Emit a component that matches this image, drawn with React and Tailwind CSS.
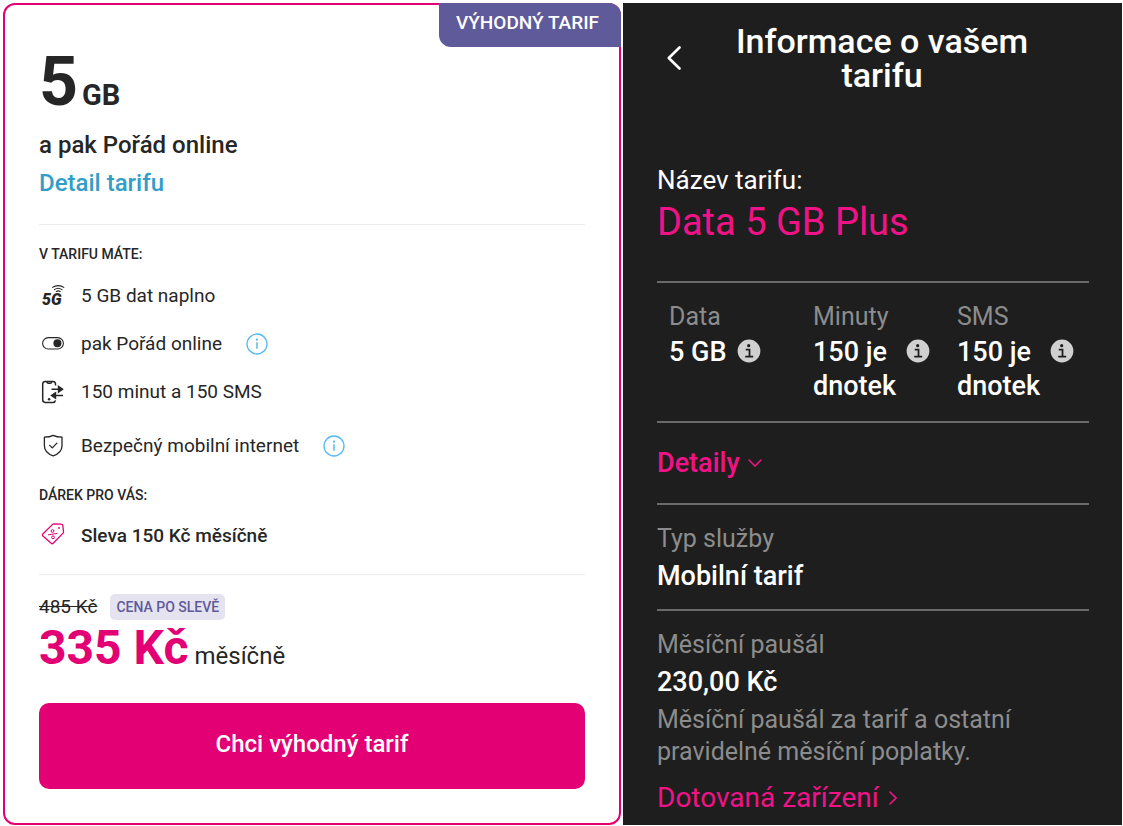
const stats = [
  { label: 'Data', lines: ['5 GB'] },
  { label: 'Minuty', lines: ['150 je', 'dnotek'] },
  { label: 'SMS', lines: ['150 je', 'dnotek'] },
]

function FiveGIcon() {
  return (
    <svg viewBox="0 0 24 24" className="h-6 w-6" fill="none" stroke="#262626" aria-hidden="true">
      <text x="1" y="21" fill="#262626" stroke="none" fontFamily="Roboto" fontSize="16" fontWeight="900" fontStyle="italic">5G</text>
      <g strokeWidth="1.1" strokeLinecap="round">
        <path d="M11.6 3.4C14.8 1 19.6 1 22.8 3.4" />
        <path d="M13.4 5.6c2.2-1.6 5.4-1.6 7.6 0" />
        <path d="M15.4 7.5c1.1-.8 2.6-.8 3.7 0" />
      </g>
    </svg>
  )
}

function ToggleIcon() {
  return (
    <svg viewBox="0 0 24 24" className="h-6 w-6" fill="none" aria-hidden="true">
      <rect x="1.6" y="5.6" width="20.8" height="11.4" rx="5.7" stroke="#262626" strokeWidth="1.1" />
      <circle cx="16.4" cy="11.3" r="4" fill="#262626" />
    </svg>
  )
}

function PhoneArrowsIcon() {
  return (
    <svg viewBox="0 0 24 24" className="h-6 w-6" fill="none" stroke="#262626" strokeWidth="1.5" aria-hidden="true">
      <path d="M14.5 5.5V4A2.6 2.6 0 0 0 12 1.4H4.2A2.6 2.6 0 0 0 1.7 4v15.8a2.6 2.6 0 0 0 2.5 2.6H12a2.6 2.6 0 0 0 2.5-2.1" />
      <path d="M5.8 1.6c.2 1.2.7 1.7 1.6 1.7h1.8c.9 0 1.4-.5 1.6-1.7" />
      <path d="M10.5 9.2H18M22 15.6h-8" />
      <path d="M16.8 5l6 4.2-6 4.2zM15.2 11.6l-6 4 6 4z" fill="#262626" stroke="none" />
      <circle cx="8.1" cy="19.3" r="1.2" fill="#262626" stroke="none" />
    </svg>
  )
}

function ShieldIcon() {
  return (
    <svg viewBox="0 0 24 24" className="h-6 w-6" fill="none" stroke="#262626" strokeWidth="1.3" strokeLinecap="round" strokeLinejoin="round" aria-hidden="true">
      <path d="M12.2 1.3c2.6 1.3 5.7 1.8 8.8 1.9v8.6c0 5-4 8.4-8.8 10.1-4.8-1.7-8.8-5.1-8.8-10.1V3.2c3.1-.1 6.2-.6 8.8-1.9z" />
      <path d="M8.7 11.4l2.6 2.5 4.6-4.8" />
    </svg>
  )
}

function TagIcon() {
  return (
    <svg viewBox="0 0 24 24" className="h-6 w-6" fill="none" stroke="#e20074" strokeWidth="1.3" strokeLinejoin="round" aria-hidden="true">
      <path d="M13 1.8l7.4.3c.8 0 1.3.5 1.4 1.2l.7 6.4c.1.5-.1 1-.4 1.4l-9.9 10.1c-.6.6-1.4.6-2 .1L1.9 14c-.6-.6-.6-1.4-.1-2L11.6 2.4c.4-.4.9-.6 1.4-.6z" />
      <circle cx="11.5" cy="9" r="1.4" strokeWidth="1" />
      <circle cx="12" cy="15.3" r="1.4" strokeWidth="1" />
      <path d="M7 12.9l9.3-1.5" strokeWidth="1" />
      <circle cx="18" cy="6" r=".9" fill="#e20074" stroke="none" />
    </svg>
  )
}

function InfoOutline() {
  return (
    <svg viewBox="0 0 22 22" className="h-[22px] w-[22px]" fill="none" stroke="#53baf2" aria-hidden="true">
      <circle cx="11" cy="11" r="10" strokeWidth="1.3" />
      <path d="M11 9.3v6.5" strokeWidth="1.5" />
      <circle cx="11" cy="6.7" r="1.1" fill="#53baf2" stroke="none" />
    </svg>
  )
}

function InfoSolid() {
  return (
    <svg viewBox="0 0 24 24" className="h-6 w-6" aria-hidden="true">
      <circle cx="12" cy="12" r="11.4" fill="#d0d0d0" />
      <circle cx="11.7" cy="6.7" r="1.6" fill="#1e1e1e" />
      <path d="M8.8 10.7h3.7v7M8.2 17.6h8" fill="none" stroke="#1e1e1e" strokeWidth="1.8" />
    </svg>
  )
}

const features = [
  { icon: <FiveGIcon />, text: '5 GB dat naplno' },
  { icon: <ToggleIcon />, text: 'pak Pořád online', info: true },
  { icon: <PhoneArrowsIcon />, text: '150 minut a 150 SMS' },
  { icon: <ShieldIcon />, text: 'Bezpečný mobilní internet', info: true, spaced: true },
]

function OfferCard() {
  return (
    <section className="relative rounded-xl border-2 border-[#e20074] bg-white px-[34px] pt-[41px] pb-[34px] text-[#262626]">
      <div className="absolute -top-0.5 -right-0.5 flex h-11 items-center rounded-tr-xl rounded-bl-xl bg-[#5f5a9a] pr-[22px] pb-1 pl-[17px] text-[19px] font-medium text-white">
        VÝHODNÝ TARIF
      </div>

      <h1 className="flex items-baseline gap-1 font-bold">
        <span className="text-[68px] leading-[72px]">5</span>
        <span className="text-[29px] leading-9">GB</span>
      </h1>
      <p className="mt-2 text-2xl leading-[38px] font-medium">a pak Pořád online</p>
      <a href="#detail" className="block text-2xl leading-[38px] font-medium text-[#329ec8]">
        Detail tarifu
      </a>

      <hr className="mt-[22px] border-[#ececec]" />

      <h2 className="mt-[19px] text-sm leading-5 font-medium">V TARIFU MÁTE:</h2>
      <ul className="mt-2">
        {features.map(({ icon, text, info, spaced }) => (
          <li key={text} className={`flex h-12 items-center text-[19px] ${spaced ? 'mt-1.5' : ''}`}>
            <span className="mr-4 ml-0.5">{icon}</span>
            {text}
            {info && (
              <button type="button" aria-label={`Více o: ${text}`} className="ml-6">
                <InfoOutline />
              </button>
            )}
          </li>
        ))}
      </ul>

      <h2 className="mt-[15px] text-sm leading-5 font-medium">DÁREK PRO VÁS:</h2>
      <p className="mt-[7px] flex h-12 items-center text-[19px] font-medium">
        <span className="mr-4 mb-1 ml-0.5"><TagIcon /></span>
        Sleva 150 Kč měsíčně
      </p>

      <hr className="mt-3.5 border-[#ececec]" />

      <div className="mt-[19px] flex h-[26px] items-center gap-[13px]">
        <s className="text-[19px]">485 Kč</s>
        <span className="rounded-[5px] bg-[#e5e3f0] px-1.5 text-sm leading-[26px] font-medium text-[#5f5a9a]">
          CENA PO SLEVĚ
        </span>
      </div>
      <p className="flex items-baseline gap-1.5">
        <strong className="text-5xl leading-14 font-bold text-[#e20074]">335 Kč</strong>
        <span className="text-2xl">měsíčně</span>
      </p>

      <button type="button" className="mt-[27px] h-[86px] w-full rounded-[10px] bg-[#e20074] pb-1 text-2xl font-medium text-white">
        Chci výhodný tarif
      </button>
    </section>
  )
}

function TariffPanel() {
  return (
    <section className="bg-[#1e1e1e] pt-[21px] pr-[33px] pl-[34px] text-[25px] leading-9 text-white">
      <header className="flex items-center">
        <button type="button" aria-label="Zpět" className="ml-2.5">
          <svg viewBox="0 0 14 24" className="h-6 w-3.5" fill="none" stroke="#fff" strokeWidth="2.6" strokeLinecap="round" strokeLinejoin="round">
            <path d="M12.5 1.5L1.8 12l10.7 10.5" />
          </svg>
        </button>
        <h1 className="flex-1 pr-9 pl-[30px] text-center text-[34px] leading-[34px] font-medium">
          Informace o vašem tarifu
        </h1>
      </header>

      <p className="mt-[70px] text-[26px]">Název tarifu:</p>
      <p className="text-[38px] leading-[48px] text-[#f01388]">Data 5 GB Plus</p>

      <dl className="mt-[35px] grid grid-cols-3 border-y-2 border-[#6a6a6a] pt-4 pb-[18px]">
        {stats.map(({ label, lines }) => (
          <div key={label} className="pl-3">
            <dt className="text-[#8c8c8c]">{label}</dt>
            <dd className="flex items-start gap-2.5 text-[27px] leading-[34px] font-medium">
              <span>
                {lines.map((line) => (
                  <span key={line} className="block whitespace-nowrap">{line}</span>
                ))}
              </span>
              <button type="button" aria-label={`Informace: ${label}`} className="mt-1">
                <InfoSolid />
              </button>
            </dd>
          </div>
        ))}
      </dl>

      <button type="button" className="mt-[22px] flex items-center gap-2 text-[27px] font-medium text-[#f01388]">
        Detaily
        <svg viewBox="0 0 14 8" className="h-2 w-3.5" fill="none" stroke="currentColor" strokeWidth="1.6" strokeLinecap="round" aria-hidden="true">
          <path d="M1 1l6 6 6-6" />
        </svg>
      </button>

      <div className="mt-[22px] border-t-2 border-[#6a6a6a] pt-4 pb-3.5">
        <p className="text-[#8c8c8c]">Typ služby</p>
        <p className="text-[27px] leading-[38px] font-medium">Mobilní tarif</p>
      </div>

      <div className="border-t-2 border-[#6a6a6a] pt-4">
        <p className="text-[#8c8c8c]">Měsíční paušál</p>
        <p className="text-[27px] leading-[38px] font-medium">230,00 Kč</p>
        <p className="mt-[3px] leading-8 text-[#8c8c8c]">
          Měsíční paušál za tarif a ostatní pravidelné měsíční poplatky.
        </p>
      </div>
      <a href="#zarizeni" className="mt-3 flex items-center gap-2.5 text-[28px] text-[#f01388]">
        Dotovaná zařízení
        <svg viewBox="0 0 8 14" className="h-3.5 w-2" fill="none" stroke="currentColor" strokeWidth="1.6" strokeLinecap="round" aria-hidden="true">
          <path d="M1 1l6 6-6 6" />
        </svg>
      </a>
    </section>
  )
}

export default function App() {
  return (
    <main className="grid grid-cols-[618fr_499fr] gap-0.5 bg-white pt-[3px] pr-px pl-[3px] font-[Roboto,'Noto_Sans',sans-serif]">
      <OfferCard />
      <TariffPanel />
    </main>
  )
}
